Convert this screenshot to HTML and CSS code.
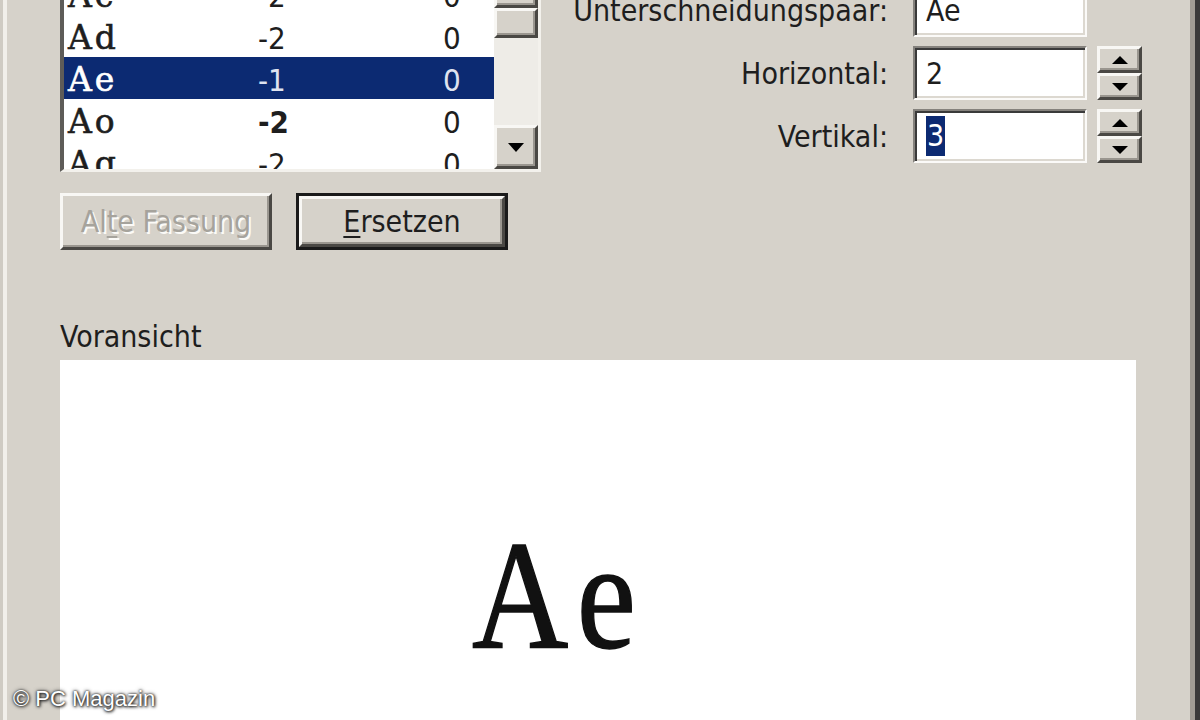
FILE: index.html
```html
<!DOCTYPE html>
<html lang="de">
<head>
<meta charset="utf-8">
<title>Unterschneidung</title>
<link rel="stylesheet" href="styles.css">
</head>
<body>
<div class="window">
  <div class="top">
    <div class="left-col">
      <div class="listbox">
        <div class="rows">
          <div class="row"><span class="pair">Ac</span><span class="num">-2</span><span class="num">0</span></div>
          <div class="row"><span class="pair">Ad</span><span class="num">-2</span><span class="num">0</span></div>
          <div class="row selected"><span class="pair">Ae</span><span class="num">-1</span><span class="num">0</span></div>
          <div class="row"><span class="pair">Ao</span><span class="num bold">-2</span><span class="num">0</span></div>
          <div class="row"><span class="pair">Aq</span><span class="num">-2</span><span class="num">0</span></div>
        </div>
        <div class="vscroll">
          <div class="sb-btn bevel"></div>
          <div class="thumb bevel"></div>
          <div class="track"></div>
          <div class="sb-btn bevel">
            <svg width="16" height="9" viewBox="0 0 16 9"><polygon points="0,0 16,0 8,9" fill="#000"/></svg>
          </div>
        </div>
      </div>
      <div class="buttons">
        <div class="btn bevel disabled">Al<u>t</u>e Fassung</div>
        <div class="btn default"><span class="btn-inner bevel"><u>E</u>rsetzen</span></div>
      </div>
    </div>
    <div class="right-col">
      <div class="label">Unterschneidungspaar:</div>
      <div class="field">Ae</div>
      <div class="spin-empty"></div>

      <div class="label">Horizontal:</div>
      <div class="field">2</div>
      <div class="spinner">
        <div class="spin bevel"><svg width="16" height="8" viewBox="0 0 16 8"><polygon points="8,0 16,8 0,8" fill="#000"/></svg></div>
        <div class="spin bevel"><svg width="16" height="8" viewBox="0 0 16 8"><polygon points="0,0 16,0 8,8" fill="#000"/></svg></div>
      </div>

      <div class="label">Vertikal:</div>
      <div class="field"><span class="sel">3</span></div>
      <div class="spinner">
        <div class="spin bevel"><svg width="16" height="8" viewBox="0 0 16 8"><polygon points="8,0 16,8 0,8" fill="#000"/></svg></div>
        <div class="spin bevel"><svg width="16" height="8" viewBox="0 0 16 8"><polygon points="0,0 16,0 8,8" fill="#000"/></svg></div>
      </div>
    </div>
  </div>
  <div class="preview-label">Voransicht</div>
  <div class="preview"><span class="sample">Ae</span></div>
</div>
<div class="watermark">© PC Magazin</div>
</body>
</html>
```
FILE: styles.css
```css
* { box-sizing: border-box; }
html, body { margin: 0; padding: 0; }
body {
  position: relative;
  width: 1200px;
  height: 720px;
  overflow: hidden;
  background: #d6d2ca;
  font-family: "DejaVu Sans", sans-serif;
  font-stretch: condensed;
  font-size: 30px;
  color: #1e1e1e;
}
.window {
  height: 760px;
  margin-top: -40px;
  padding: 0 58px 0 60px;
  box-shadow: inset 3px 0 0 #cfcbc3, inset 7px 0 0 #f1efea, inset -5px 0 0 #3a3a3a, inset -10px 0 0 #a19d95;
}
.top { display: flex; }
.left-col { width: 481px; flex: none; }

.listbox {
  display: flex;
  height: 212px;
  background: #fff;
  border-style: solid;
  border-width: 4px 3px 3px 4px;
  border-color: #5e5c58 #f3f1ec #f3f1ec #5e5c58;
}
.rows { flex: 1; overflow: hidden; padding-top: 9px; }
.row {
  height: 42px;
  display: grid;
  grid-template-columns: 190px 185px 1fr;
  align-items: center;
  padding: 4px 0 0 4px;
  line-height: 38px;
}
.row.selected { background: #0c2a72; color: #fff; }
.row.selected .num { color: #dfe3f0; }
.pair {
  font-family: "DejaVu Serif", "Liberation Serif", serif;
  font-stretch: normal;
  font-size: 33px;
  letter-spacing: 3px;
  -webkit-text-stroke: 0.6px currentColor;
}
.num { font-size: 31px; }
.num.bold { font-weight: bold; }

.bevel {
  background: #d6d2ca;
  border-style: solid;
  border-width: 3px;
  border-color: #f8f7f4 #4a4844 #4a4844 #f8f7f4;
  box-shadow: inset -2px -2px 0 #9a968f;
}
.vscroll { width: 44px; flex: none; display: flex; flex-direction: column; background: #eeece7; }
.sb-btn { height: 44px; display: flex; align-items: center; justify-content: center; }
.thumb { height: 30px; }
.track { flex: 1; }

.buttons { display: flex; gap: 24px; margin-top: 21px; }
.btn {
  width: 212px;
  height: 57px;
  display: flex;
  align-items: center;
  justify-content: center;
}
.btn u { text-underline-offset: 4px; text-decoration-thickness: 2px; }
.btn.disabled { color: #a6a39c; text-shadow: 2px 2px 0 #fbfaf7; }
.btn.default { border: 3px solid #1a1a1a; background: #d6d2ca; }
.btn-inner { width: 100%; height: 100%; display: flex; align-items: center; justify-content: center; }

.right-col {
  flex: 1;
  display: grid;
  grid-template-columns: 1fr 174px 55px;
  grid-auto-rows: 54px;
  row-gap: 9px;
  padding-top: 23px;
  align-content: start;
}
.label { text-align: right; padding-right: 25px; align-self: center; }
.field {
  background: #fff;
  border-style: solid;
  border-width: 2px;
  border-color: #85827d #fbfaf8 #fbfaf8 #85827d;
  box-shadow: inset 2px 2px 0 #3a3a3a, inset -2px -2px 0 #dcd8d0;
  padding-left: 11px;
  display: flex;
  align-items: center;
}
.sel { background: #0c2a72; color: #fff; line-height: 40px; padding: 0 1px; }
.spinner { margin-left: 10px; display: flex; flex-direction: column; }
.spin { flex: 1; display: flex; align-items: center; justify-content: center; }

.preview-label { margin-top: 69px; line-height: 36px; }
.preview {
  margin-top: 5px;
  width: 1076px;
  height: 420px;
  background: #fff;
  padding: 158px 0 0 412px;
}
.sample {
  display: inline-block;
  font-family: "Liberation Serif", "Times New Roman", serif;
  font-stretch: normal;
  font-size: 155px;
  line-height: 1;
  letter-spacing: 10px;
  color: #111;
  -webkit-text-stroke: 1.5px #111;
  transform: scaleX(0.86);
  transform-origin: left top;
}
.watermark {
  position: absolute;
  left: 13px;
  top: 686px;
  font-family: "Liberation Sans", Arial, sans-serif;
  font-stretch: normal;
  font-size: 22px;
  color: #fff;
  text-shadow: 0 0 2px #222, 1px 1px 3px #222, 0 0 4px #444;
}
```
